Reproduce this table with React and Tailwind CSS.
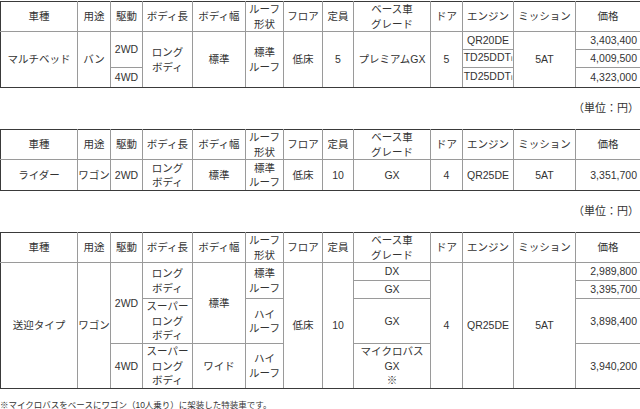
const font = { fontFamily: '"Liberation Sans", "Noto Sans CJK JP", sans-serif' }

const cell = 'border border-[#9a9a9a] text-center align-middle p-0 font-normal'
const T = 'border-t-[#3a3a3a]'
const B = 'border-b-[#3a3a3a]'
const L = 'border-l-[#3a3a3a]'
const R = 'border-r-[#3a3a3a]'
const price = 'text-right pr-[3px]'

const widths = [77, 33, 32, 50, 53, 38, 39, 31, 77, 32, 51, 62, 65]

function TDDT() {
  return (
    <span>
      TD25DDT<span className="text-[6.5px]">i</span>
    </span>
  )
}

function Table({ children }) {
  return (
    <table className="w-[640px] table-fixed border-collapse text-[10.5px] leading-[14.5px] text-[#333]">
      <colgroup>
        {widths.map((w, i) => (
          <col key={i} style={{ width: w }} />
        ))}
      </colgroup>
      <thead>
        <tr className="h-[30px]">
          <th className={`${cell} ${T} ${L}`}>車種</th>
          <th className={`${cell} ${T}`}>用途</th>
          <th className={`${cell} ${T}`}>駆動</th>
          <th className={`${cell} ${T}`}>ボディ長</th>
          <th className={`${cell} ${T}`}>ボディ幅</th>
          <th className={`${cell} ${T}`}>
            ルーフ
            <br />
            形状
          </th>
          <th className={`${cell} ${T}`}>フロア</th>
          <th className={`${cell} ${T}`}>定員</th>
          <th className={`${cell} ${T}`}>
            ベース車
            <br />
            グレード
          </th>
          <th className={`${cell} ${T}`}>ドア</th>
          <th className={`${cell} ${T}`}>エンジン</th>
          <th className={`${cell} ${T}`}>ミッション</th>
          <th className={`${cell} ${T} ${R}`}>価格</th>
        </tr>
      </thead>
      <tbody>{children}</tbody>
    </table>
  )
}

function Unit() {
  return (
    <div className="h-[41px] flex items-center justify-end pr-px text-[11px] text-[#333]">（単位：円）</div>
  )
}

export default function App() {
  return (
    <div className="w-[640px] h-[409px] bg-white pt-px overflow-hidden" style={font}>
      <Table>
        <tr className="h-[18px]">
          <td rowSpan={3} className={`${cell} ${L} ${B}`}>マルチベッド</td>
          <td rowSpan={3} className={`${cell} ${B}`}>バン</td>
          <td rowSpan={2} className={cell}>2WD</td>
          <td rowSpan={3} className={`${cell} ${B}`}>
            ロング
            <br />
            ボディ
          </td>
          <td rowSpan={3} className={`${cell} ${B}`}>標準</td>
          <td rowSpan={3} className={`${cell} ${B}`}>
            標準
            <br />
            ルーフ
          </td>
          <td rowSpan={3} className={`${cell} ${B}`}>低床</td>
          <td rowSpan={3} className={`${cell} ${B}`}>5</td>
          <td rowSpan={3} className={`${cell} ${B}`}>プレミアムGX</td>
          <td rowSpan={3} className={`${cell} ${B}`}>5</td>
          <td className={cell}>QR20DE</td>
          <td rowSpan={3} className={`${cell} ${B}`}>5AT</td>
          <td className={`${cell} ${price} ${R}`}>3,403,400</td>
        </tr>
        <tr className="h-[18px]">
          <td className={cell}>
            <TDDT />
          </td>
          <td className={`${cell} ${price} ${R}`}>4,009,500</td>
        </tr>
        <tr className="h-[20px]">
          <td className={`${cell} ${B}`}>4WD</td>
          <td className={`${cell} ${B}`}>
            <TDDT />
          </td>
          <td className={`${cell} ${price} ${R} ${B}`}>4,323,000</td>
        </tr>
      </Table>

      <Unit />

      <Table>
        <tr className="h-[31px]">
          <td className={`${cell} ${L} ${B}`}>ライダー</td>
          <td className={`${cell} ${B}`}>ワゴン</td>
          <td className={`${cell} ${B}`}>2WD</td>
          <td className={`${cell} ${B}`}>
            ロング
            <br />
            ボディ
          </td>
          <td className={`${cell} ${B}`}>標準</td>
          <td className={`${cell} ${B}`}>
            標準
            <br />
            ルーフ
          </td>
          <td className={`${cell} ${B}`}>低床</td>
          <td className={`${cell} ${B}`}>10</td>
          <td className={`${cell} ${B}`}>GX</td>
          <td className={`${cell} ${B}`}>4</td>
          <td className={`${cell} ${B}`}>QR25DE</td>
          <td className={`${cell} ${B}`}>5AT</td>
          <td className={`${cell} ${price} ${R} ${B}`}>3,351,700</td>
        </tr>
      </Table>

      <Unit />

      <Table>
        <tr className="h-[18px]">
          <td rowSpan={4} className={`${cell} ${L} ${B}`}>送迎タイプ</td>
          <td rowSpan={4} className={`${cell} ${B}`}>ワゴン</td>
          <td rowSpan={3} className={cell}>2WD</td>
          <td rowSpan={2} className={cell}>
            ロング
            <br />
            ボディ
          </td>
          <td rowSpan={3} className={cell}>標準</td>
          <td rowSpan={2} className={cell}>
            標準
            <br />
            ルーフ
          </td>
          <td rowSpan={4} className={`${cell} ${B}`}>低床</td>
          <td rowSpan={4} className={`${cell} ${B}`}>10</td>
          <td className={cell}>DX</td>
          <td rowSpan={4} className={`${cell} ${B}`}>4</td>
          <td rowSpan={4} className={`${cell} ${B}`}>QR25DE</td>
          <td rowSpan={4} className={`${cell} ${B}`}>5AT</td>
          <td className={`${cell} ${price} ${R}`}>2,989,800</td>
        </tr>
        <tr className="h-[18px]">
          <td className={cell}>GX</td>
          <td className={`${cell} ${price} ${R}`}>3,395,700</td>
        </tr>
        <tr className="h-[45px]">
          <td className={cell}>
            スーパー
            <br />
            ロング
            <br />
            ボディ
          </td>
          <td className={cell}>
            ハイ
            <br />
            ルーフ
          </td>
          <td className={cell}>GX</td>
          <td className={`${cell} ${price} ${R}`}>3,898,400</td>
        </tr>
        <tr className="h-[44px]">
          <td className={`${cell} ${B}`}>4WD</td>
          <td className={`${cell} ${B}`}>
            スーパー
            <br />
            ロング
            <br />
            ボディ
          </td>
          <td className={`${cell} ${B}`}>ワイド</td>
          <td className={`${cell} ${B}`}>
            ハイ
            <br />
            ルーフ
          </td>
          <td className={`${cell} ${B}`}>
            マイクロバス
            <br />
            GX
            <br />※
          </td>
          <td className={`${cell} ${price} ${R} ${B}`}>3,940,200</td>
        </tr>
      </Table>

      <p className="pt-[10px] text-[8.5px] leading-[12px] text-[#333]">
        ※マイクロバスをベースにワゴン（10人乗り）に架装した特装車です。
      </p>
    </div>
  )
}
